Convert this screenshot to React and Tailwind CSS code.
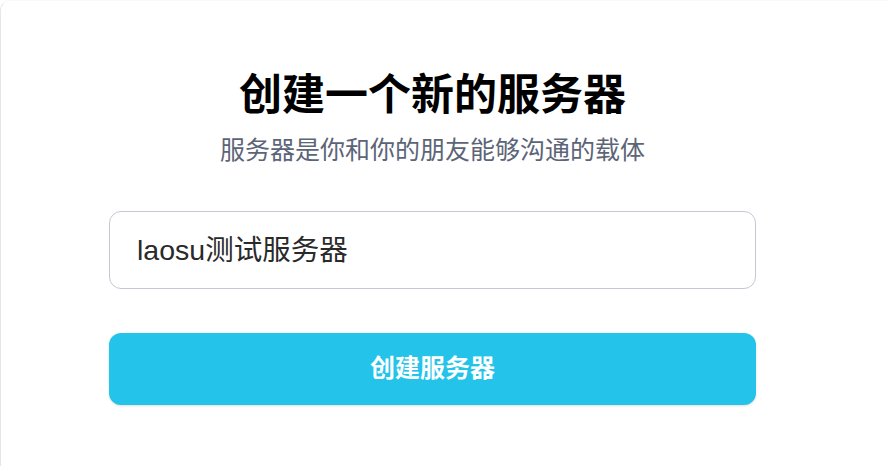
export default function App() {
    return (
        <div className="w-[889px] h-[466px] bg-white overflow-hidden">
            <div
                className="w-[920px] h-[480px] bg-white rounded-tl-[10px] border-l border-t border-l-[#e6e6e6] border-t-[#f8f8f8]"
                style={{ fontFamily: '"Liberation Sans", "Noto Sans CJK SC", sans-serif' }}
            >
                <div className="w-[863px] flex flex-col items-center pt-[68px]">
                    <h1 className="text-[43px] leading-[52px] font-bold text-black">创建一个新的服务器</h1>
                    <p className="mt-[13px] text-[25px] leading-[32px] text-[#5c6577]">
                        服务器是你和你的朋友能够沟通的载体
                    </p>
                    <div className="mt-[45px] w-[647px] h-[78px] rounded-[12px] border-[1.5px] border-[#c5c7d6] flex items-center px-[27px]">
                        <input
                            type="text"
                            defaultValue="laosu测试服务器"
                            className="w-full bg-transparent outline-none text-[28.5px] text-[#2a2a2a]"
                        />
                    </div>
                    <button className="mt-[44px] w-[647px] h-[72px] rounded-[12px] bg-[#24c3ea] shadow-sm text-white text-[25px] font-bold">
                        创建服务器
                    </button>
                </div>
            </div>
        </div>
    );
}
